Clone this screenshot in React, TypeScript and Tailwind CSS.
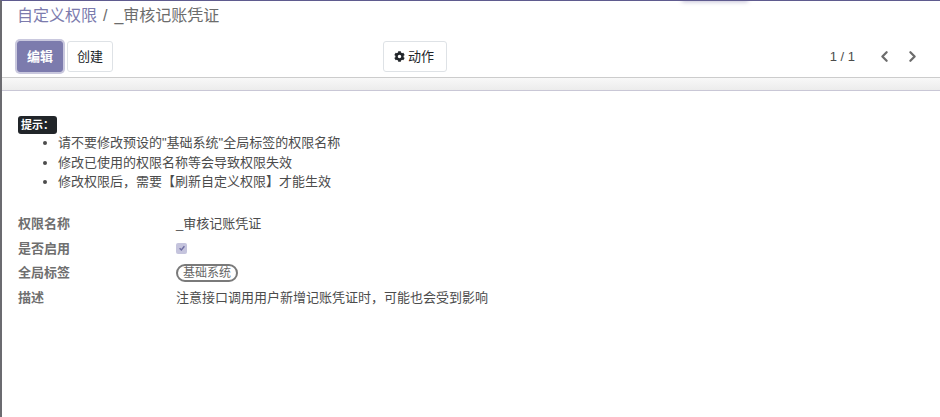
import { FaCog } from "react-icons/fa";
import { ChevronLeft, ChevronRight } from "lucide-react";

const font = "font-['Liberation_Sans','Noto_Sans_CJK_SC',sans-serif]";

const notes = [
  '请不要修改预设的"基础系统"全局标签的权限名称',
  "修改已使用的权限名称等会导致权限失效",
  "修改权限后，需要【刷新自定义权限】才能生效",
];

function Field({ label, children }: { label: string; children: React.ReactNode }) {
  return (
    <div className="flex h-[24.6px] items-center">
      <div className="w-[158px] text-[13px] font-bold text-[#6f6f6f]">{label}</div>
      <div className="flex items-center text-[13px] text-[#4c4c4c]">{children}</div>
    </div>
  );
}

export default function App() {
  return (
    <div className={`${font} relative flex h-[417px] w-[940px] flex-col overflow-hidden border-l-2 border-t border-l-[#6b6b70] border-t-[#5f5b8f] bg-white`}>
      {/* notification shadow peeking in at the top */}
      <div className="absolute left-[680px] top-[-6px] h-[6px] w-[66px] shadow-[0_1px_4px_rgba(90,80,140,0.35)]" />

      <div className="flex h-[77px] flex-col border-b border-[#ccc]">
        <div className="pl-[15px] pt-[5px] text-[16px] leading-[20px] text-[#6c6c6c]">
          <span className="text-[#7c7bad]">自定义权限</span>
          <span className="mx-[6px]">/</span>
          <span className="ml-[1px]">_审核记账凭证</span>
        </div>
        <div className="relative mt-[15px] flex items-center pl-[15px] pr-[19px]">
          <button className="flex h-[31px] w-[46px] items-center justify-center rounded-[3px] border border-[#7c7bad] bg-[#7c7bad] text-[13px] font-bold text-white ring-[2px] ring-[#c9c8de]">
            编辑
          </button>
          <button className="ml-[4px] flex h-[31px] w-[46px] items-center justify-center rounded-[3px] border border-[#dee2e6] bg-white text-[13px] text-[#212529]">
            创建
          </button>
          <button className="absolute left-[381px] flex h-[31px] w-[64px] items-center justify-center gap-[3px] rounded-[3px] border border-[#dee2e6] bg-white pr-[2px] text-[13px] text-[#212529]">
            <FaCog className="h-[11px] w-[11px]" />
            动作
          </button>
          <div className="ml-auto flex items-center">
            <span className="text-[13px] text-[#4c4c4c]">1 / 1</span>
            <ChevronLeft className="ml-[21px] h-[17px] w-[17px] text-[#6c6c6c]" strokeWidth={3.2} />
            <ChevronRight className="ml-[11px] h-[17px] w-[17px] text-[#6c6c6c]" strokeWidth={3.2} />
          </div>
        </div>
      </div>

      <div className="h-[13px] border-b border-[#c9c7d6] bg-gradient-to-b from-[#f8f8f8] to-[#ececec]" />

      <div className="flex-1 pl-[16px] pt-[25px]">
        <span className="block w-[39px] whitespace-nowrap rounded-[3px] bg-[#212529] px-[3px] text-[11px] font-bold leading-[18px] text-white">
          提示：
        </span>
        <ul className="mt-[-1px] list-disc pl-[40px] text-[13px] leading-[19.5px] text-[#4c4c4c]">
          {notes.map((note) => (
            <li key={note}>{note}</li>
          ))}
        </ul>

        <div className="mt-[20px]">
          <Field label="权限名称">_审核记账凭证</Field>
          <Field label="是否启用">
            <span className="flex h-[11px] w-[11px] items-center justify-center rounded-[2px] bg-[#c5c4dd]">
              <svg viewBox="0 0 10 10" className="h-[8px] w-[8px]" fill="none" stroke="#6f6ea3" strokeWidth="1.8">
                <path d="M2 5.2 4.2 7.4 8 2.8" />
              </svg>
            </span>
          </Field>
          <Field label="全局标签">
            <span className="rounded-full border-2 border-[#7a7a7a] px-[5px] text-[12px] leading-[14px] text-[#666]">
              基础系统
            </span>
          </Field>
          <Field label="描述">注意接口调用用户新增记账凭证时，可能也会受到影响</Field>
        </div>
      </div>
    </div>
  );
}
